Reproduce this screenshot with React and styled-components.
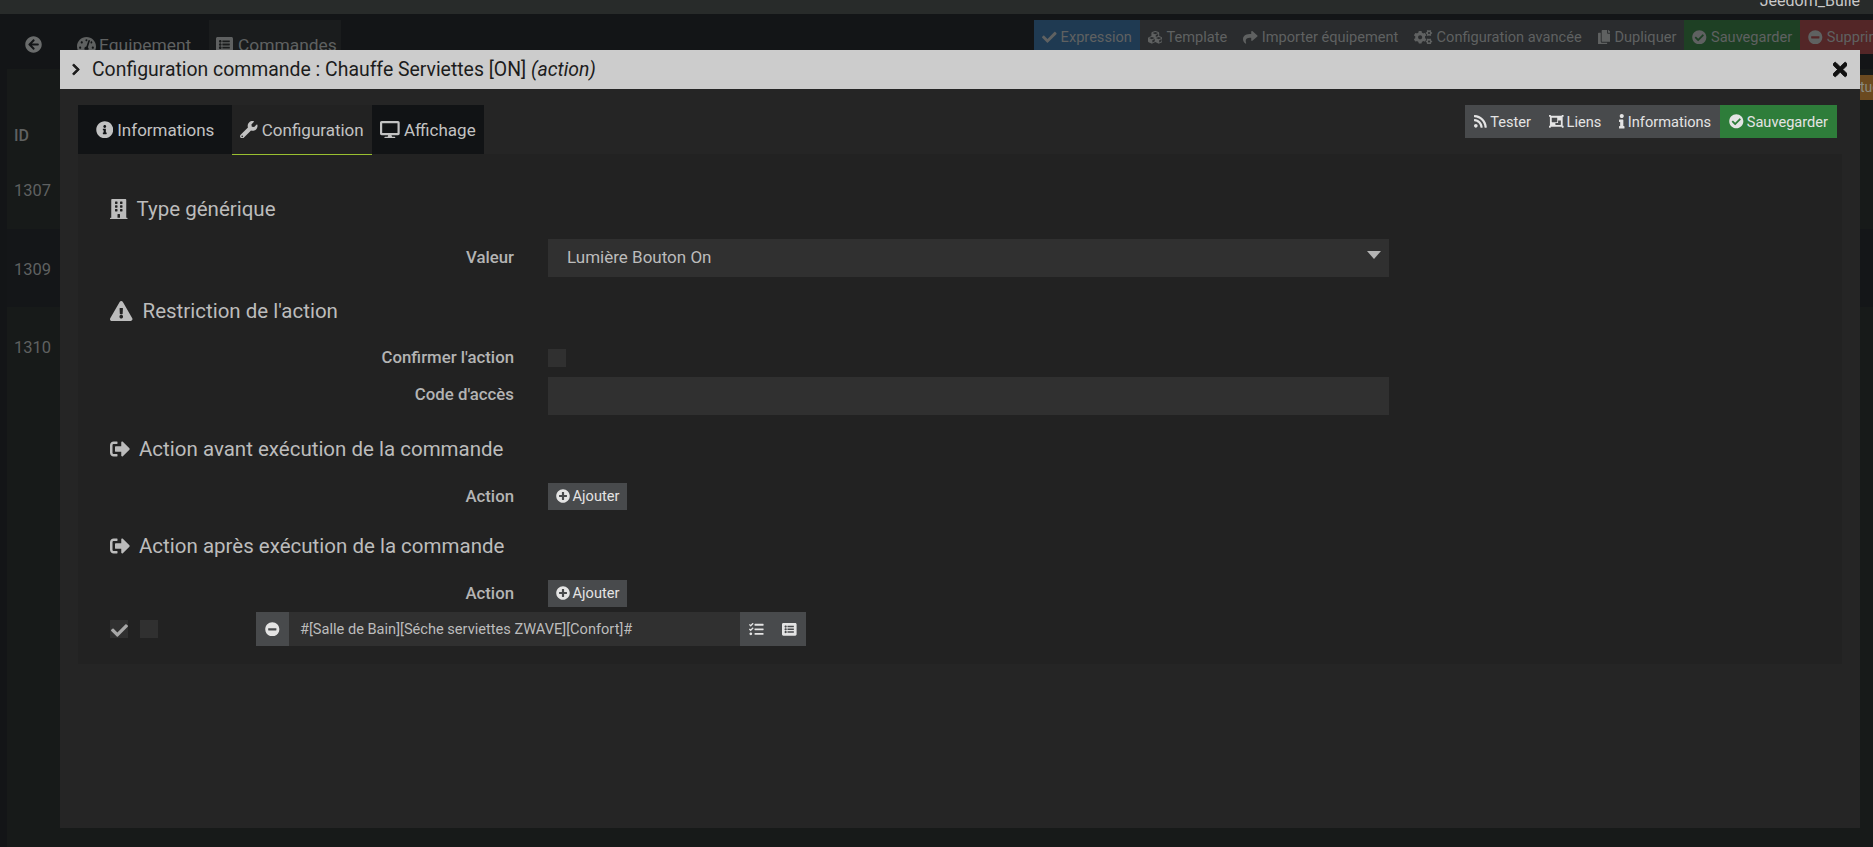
import styled, { createGlobalStyle } from 'styled-components';
import {
  FaArrowCircleLeft,
  FaBuilding,
  FaCheck,
  FaCheckCircle,
  FaChevronRight,
  FaCogs,
  FaCopy,
  FaCubes,
  FaDesktop,
  FaExclamationTriangle,
  FaInfo,
  FaInfoCircle,
  FaListAlt,
  FaMinusCircle,
  FaObjectGroup,
  FaPlusCircle,
  FaRss,
  FaShare,
  FaSignOutAlt,
  FaTachometerAlt,
  FaTasks,
  FaTimes,
  FaWrench,
} from 'react-icons/fa';

const GlobalStyle = createGlobalStyle`
  html, body {
    margin: 0;
    padding: 0;
    background: #131517;
  }

  * {
    box-sizing: border-box;
  }

  body {
    font-family: Roboto, "Liberation Sans", sans-serif;
    font-size: 14.6px;
    overflow: hidden;
  }
`;

const COLORS = {
  barTint: '#484a4c',
  fieldBg: '#303030',
  panelBg: '#222222',
  modalBg: '#252525',
  text: '#bcbcbc',
  dim: '#5f6161',
};

function Backdrop() {
  return (
    <Page>
      <TopBar>
        <UserName>Jeedom_Bulle</UserName>
      </TopBar>
      <Toolbar>
        <PageTabs>
          <BackIcon />
          <PageTab $width={139} $icon={19}>
            <FaTachometerAlt /> Equipement
          </PageTab>
          <PageTab $width={132} $icon={17} $active>
            <FaListAlt /> Commandes
          </PageTab>
        </PageTabs>
        <ToolButtons>
          <ToolButton $bg="#1f3a52">
            <FaCheck /> Expression
          </ToolButton>
          <ToolButton>
            <FaCubes /> Template
          </ToolButton>
          <ToolButton>
            <FaShare /> Importer équipement
          </ToolButton>
          <ToolButton $icon={18.2}>
            <FaCogs /> Configuration avancée
          </ToolButton>
          <ToolButton $icon={12.8}>
            <FaCopy /> Dupliquer
          </ToolButton>
          <ToolButton $bg="#1e4024">
            <FaCheckCircle /> Sauvegarder
          </ToolButton>
          <ToolButton $bg="#532627">
            <FaMinusCircle /> Supprimer
          </ToolButton>
        </ToolButtons>
      </Toolbar>
      <Table>
        <HeadRow>
          <IdHead>ID</IdHead>
          <Badge>tue</Badge>
        </HeadRow>
        <Row>1307</Row>
        <Row $dark>1309</Row>
        <Row>1310</Row>
      </Table>
    </Page>
  );
}

function Modal() {
  return (
    <ModalBox>
      <TitleBar>
        <Title>
          <TitleChevron />
          <span>
            Configuration commande : Chauffe Serviettes [ON] <em>(action)</em>
          </span>
        </Title>
        <CloseIcon />
      </TitleBar>

      <ModalBody>
        <TabRow>
          <Tabs>
            <Tab $width={154} $icon={17.5}>
              <FaInfoCircle /> Informations
            </Tab>
            <Tab $width={140} $icon={17.5} $active>
              <FaWrench /> Configuration
            </Tab>
            <Tab $width={112} $icon={19.7}>
              <FaDesktop /> Affichage
            </Tab>
          </Tabs>
          <ActionGroup>
            <ActionLink $icon={12.8}>
              <FaRss /> Tester
            </ActionLink>
            <ActionLink>
              <FaObjectGroup /> Liens
            </ActionLink>
            <ActionLink $icon={5.5}>
              <FaInfo /> Informations
            </ActionLink>
            <ActionLink $bg="#2e7d3a">
              <FaCheckCircle /> Sauvegarder
            </ActionLink>
          </ActionGroup>
        </TabRow>

        <Panel>
          <Heading $icon={17.5}>
            <FaBuilding /> Type générique
          </Heading>
          <FormRow $top={15}>
            <Label>Valeur</Label>
            <Select>
              Lumière Bouton On
              <Caret />
            </Select>
          </FormRow>

          <Heading $top={19} $icon={22.5} $gap={10}>
            <FaExclamationTriangle /> Restriction de l'action
          </Heading>
          <FormRow $top={15} $height={34}>
            <Label>Confirmer l'action</Label>
            <Checkbox />
          </FormRow>
          <FormRow $top={2}>
            <Label $raised>Code d'accès</Label>
            <Input />
          </FormRow>

          <Heading $top={19}>
            <FaSignOutAlt /> Action avant exécution de la commande
          </Heading>
          <FormRow $top={19} $height={27}>
            <Label>Action</Label>
            <AddButton>
              <FaPlusCircle /> Ajouter
            </AddButton>
          </FormRow>

          <Heading $top={21}>
            <FaSignOutAlt /> Action après exécution de la commande
          </Heading>
          <FormRow $top={19} $height={27}>
            <Label>Action</Label>
            <AddButton>
              <FaPlusCircle /> Ajouter
            </AddButton>
          </FormRow>

          <ActionLine>
            <Checks>
              <Checkbox>
                <FaCheck />
              </Checkbox>
              <Checkbox />
            </Checks>
            <InputGroup>
              <Addon $width={33}>
                <FaMinusCircle />
              </Addon>
              <CmdValue>#[Salle de Bain][Séche serviettes ZWAVE][Confort]#</CmdValue>
              <Addon $width={66}>
                <FaTasks />
                <FaListAlt />
              </Addon>
            </InputGroup>
          </ActionLine>
        </Panel>
      </ModalBody>
    </ModalBox>
  );
}

export default function App() {
  return (
    <>
      <GlobalStyle />
      <Backdrop />
      <Modal />
    </>
  );
}

const Page = styled.div`
  height: 100vh;
  overflow: hidden;
  display: flex;
  flex-direction: column;
  background: #131517;
  color: ${COLORS.dim};
`;

const TopBar = styled.div`
  height: 14px;
  flex: none;
  background: #282b2a;
  display: flex;
  justify-content: flex-end;
  align-items: flex-end;
  overflow: hidden;
  padding-right: 13px;
`;

const UserName = styled.span`
  color: #c8c8c8;
  font-size: 16px;
  line-height: 18px;
  margin-bottom: 4px;
  flex: none;
`;

const Toolbar = styled.div`
  height: 49px;
  flex: none;
  margin-top: 6px;
  display: flex;
  align-items: flex-start;
`;

const PageTabs = styled.div`
  width: 1034px;
  flex: none;
  display: flex;
  align-items: stretch;
  height: 49px;
  padding-left: 25px;
`;

const BackIcon = styled(FaArrowCircleLeft)`
  width: 17px;
  height: 17px;
  margin: 16px 28px 0 0;
  color: #6a6c6c;
`;

const PageTab = styled.div`
  width: ${(p) => p.$width}px;
  padding: 0 7px;
  display: flex;
  align-items: center;
  gap: ${(p) => (p.$icon > 17 ? 3 : 5)}px;
  font-size: 17.4px;
  background: ${(p) => (p.$active ? '#1a1c1d' : 'transparent')};

  svg {
    width: ${(p) => p.$icon}px;
    height: 17px;
    flex: none;
  }
`;

const ToolButtons = styled.div`
  display: flex;
  height: 34px;
  flex: none;
`;

const ToolButton = styled.div`
  height: 34px;
  padding: 0 8px;
  display: flex;
  align-items: center;
  gap: 4px;
  white-space: nowrap;
  background: ${(p) => p.$bg || '#2a2c2e'};

  svg {
    width: ${(p) => p.$icon || 14.6}px;
    height: 14.6px;
  }
`;

const Table = styled.div`
  flex: 1;
  margin-left: 7px;
  background: #171a19;
`;

const HeadRow = styled.div`
  height: 81px;
  padding-left: 7px;
  display: flex;
  justify-content: space-between;
`;

const IdHead = styled.span`
  font-size: 16px;
  font-weight: 500;
  margin-top: 57px;
`;

const Badge = styled.span`
  width: 13px;
  height: 25px;
  margin-top: 6px;
  overflow: hidden;
  background: #6b4a20;
  color: #8a8a80;
  font-size: 14px;
  line-height: 25px;
`;

const Row = styled.div`
  height: 78.5px;
  padding: 31px 0 0 7px;
  font-size: 16.5px;
  line-height: 20px;
  background: ${(p) => (p.$dark ? '#141618' : '#171a19')};
`;

const ModalBox = styled.div`
  position: absolute;
  left: 60px;
  top: 50px;
  width: 1800px;
  height: 778px;
  background: ${COLORS.modalBg};
`;

const TitleBar = styled.div`
  height: 39px;
  background: #cccccc;
  color: #1c1c1c;
  display: flex;
  align-items: center;
  justify-content: space-between;
  padding: 0 13px 0 12px;
`;

const Title = styled.div`
  display: flex;
  align-items: center;
  gap: 12px;
  font-size: 19.4px;
`;

const TitleChevron = styled(FaChevronRight)`
  width: 8px;
  height: 13px;
  stroke: currentColor;
  stroke-width: 30;
`;

const CloseIcon = styled(FaTimes)`
  width: 14.4px;
  height: 21px;
  color: #111;
  stroke: currentColor;
  stroke-width: 20;
`;

const ModalBody = styled.div`
  padding: 16px 18px 0;
`;

const TabRow = styled.div`
  height: 49px;
  display: flex;
  justify-content: space-between;
  align-items: flex-start;
`;

const Tabs = styled.div`
  display: flex;
`;

const Tab = styled.div`
  width: ${(p) => p.$width}px;
  height: ${(p) => (p.$active ? 50 : 49)}px;
  display: flex;
  align-items: center;
  justify-content: center;
  gap: 4px;
  font-size: 17px;
  color: #c2c2c2;
  background: ${(p) => (p.$active ? COLORS.panelBg : '#111315')};
  border-bottom: ${(p) => (p.$active ? '1px solid #9ac030' : 'none')};

  svg {
    width: ${(p) => p.$icon}px;
    height: 17.5px;
    flex: none;
  }
`;

const ActionGroup = styled.div`
  display: flex;
  height: 33px;
  margin-right: 5px;
  background: ${COLORS.barTint};
`;

const ActionLink = styled.div`
  height: 33px;
  padding: 0 9px;
  display: flex;
  align-items: center;
  gap: 3px;
  color: #e4e4e4;
  background: ${(p) => p.$bg || 'transparent'};

  svg {
    width: ${(p) => p.$icon || 14.6}px;
    height: 14.6px;
  }
`;

const Panel = styled.div`
  background: ${COLORS.panelBg};
  padding: 40px 0 17px 32px;
  height: 510px;
`;

const Heading = styled.div`
  height: 30px;
  margin-top: ${(p) => p.$top || 0}px;
  display: flex;
  align-items: center;
  gap: ${(p) => p.$gap || 9}px;
  font-size: 20.5px;
  color: ${COLORS.text};

  svg {
    width: ${(p) => p.$icon || 20}px;
    height: 20px;
    flex: none;
  }
`;

const FormRow = styled.div`
  margin-top: ${(p) => p.$top || 0}px;
  height: ${(p) => p.$height || 38}px;
  display: grid;
  grid-template-columns: 404px 841px;
  column-gap: 34px;
  align-items: center;
`;

const Label = styled.label`
  text-align: right;
  font-weight: 500;
  font-size: 16.8px;
  color: #b4b4b4;
  margin-top: ${(p) => (p.$raised ? -4 : -2)}px;
`;

const Select = styled.div`
  position: relative;
  height: 38px;
  padding: 0 19px 2px;
  display: flex;
  align-items: center;
  font-size: 17px;
  color: ${COLORS.text};
  background: ${COLORS.fieldBg};
`;

const Caret = styled.span`
  position: absolute;
  right: 8px;
  top: 12px;
  width: 0;
  height: 0;
  border-left: 7.5px solid transparent;
  border-right: 7.5px solid transparent;
  border-top: 8px solid #b4b4b4;
`;

const Input = styled.div`
  height: 38px;
  background: ${COLORS.fieldBg};
`;

const Checkbox = styled.span`
  width: 18px;
  height: 18px;
  display: flex;
  align-items: center;
  justify-content: center;
  background: ${COLORS.fieldBg};
  color: #a8a8a8;

  svg {
    width: 17px;
    height: 17px;
    margin-top: 2px;
  }
`;

const AddButton = styled.div`
  width: 79px;
  height: 27px;
  padding-bottom: 1px;
  display: flex;
  align-items: center;
  justify-content: center;
  gap: 3px;
  color: #e4e4e4;
  background: ${COLORS.barTint};

  svg {
    width: 14px;
    height: 14px;
  }
`;

const ActionLine = styled.div`
  margin-top: 5px;
  height: 34px;
  display: flex;
  align-items: center;
`;

const Checks = styled.div`
  width: 146px;
  display: flex;
  gap: 12px;
`;

const InputGroup = styled.div`
  display: flex;
  width: 550px;
  height: 34px;
`;

const Addon = styled.div`
  width: ${(p) => p.$width}px;
  flex: none;
  display: flex;
  align-items: center;
  justify-content: center;
  gap: 18px;
  color: #e4e4e4;
  background: ${COLORS.barTint};

  svg {
    width: 14.6px;
    height: 14.6px;
  }
`;

const CmdValue = styled.div`
  flex: 1;
  padding-left: 11px;
  display: flex;
  align-items: center;
  color: ${COLORS.text};
  background: ${COLORS.fieldBg};
`;
